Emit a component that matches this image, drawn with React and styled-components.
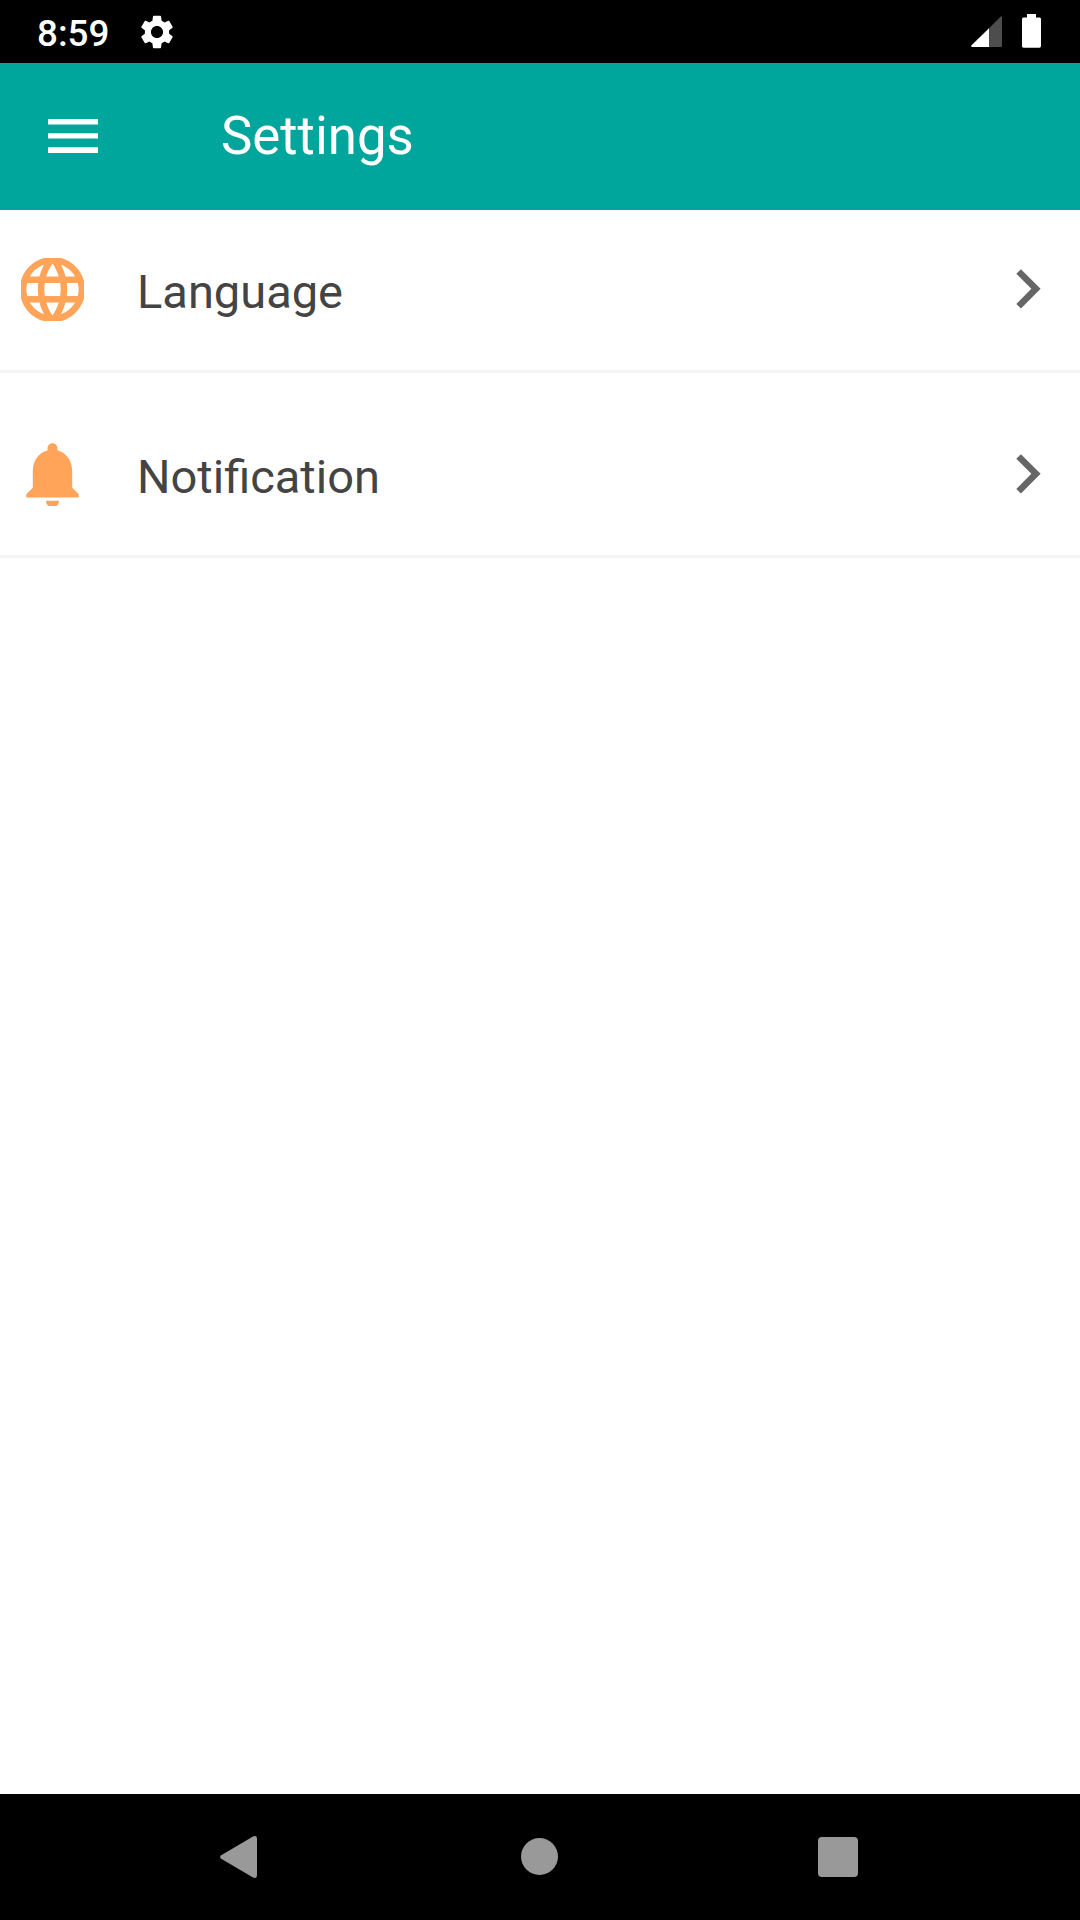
import React from 'react';
import styled, { createGlobalStyle } from 'styled-components';

const GlobalStyle = createGlobalStyle`
  * { box-sizing: border-box; }
  body { margin: 0; background: #fff; font-family: Roboto, "Noto Sans", sans-serif; }
  svg { display: block; flex: none; }
`;

const Screen = styled.div`
  width: 1080px;
  height: 1920px;
  display: flex;
  flex-direction: column;
  overflow: hidden;
  background: #fff;
`;

const StatusBar = styled.header`
  height: 63px;
  flex: none;
  display: flex;
  justify-content: space-between;
  padding: 0 39px 0 37px;
  background: #000;
  color: #fff;
`;

const StatusGroup = styled.div`
  display: flex;
  align-items: flex-start;
  gap: ${(p) => p.$gap}px;
  padding-top: ${(p) => p.$top}px;
`;

const Clock = styled.span`
  width: 72px;
  font-size: 36.75px;
  font-weight: 500;
  line-height: 43px;
  margin-top: -3px;
  white-space: nowrap;
`;

const AppBar = styled.div`
  height: 147px;
  flex: none;
  display: flex;
  align-items: flex-start;
  padding: 42px 48px 0;
  gap: 123px;
  background: #00a69c;
  color: #fff;
`;

const MenuButton = styled.button`
  width: 50px;
  height: 34px;
  margin-top: 14px;
  padding: 0;
  border: 0;
  background: none;
  color: inherit;
  display: block;
`;

const Title = styled.h1`
  margin: 0;
  font-size: 52.8px;
  font-weight: 400;
  line-height: 62px;
`;

const List = styled.main`
  flex: 1;
  display: flex;
  flex-direction: column;
`;

const Row = styled.div`
  height: ${(p) => (p.$first ? 163 : 185)}px;
  padding: ${(p) => (p.$first ? 48 : 70)}px 21px 0;
  display: flex;
  align-items: flex-start;
  border-bottom: 3px solid #f4f4f4;
`;

const Label = styled.span`
  flex: 1;
  margin-left: 53px;
  padding-top: 6px;
  font-size: 47px;
  line-height: 56px;
  color: #444;
`;

const NavBar = styled.footer`
  height: 126px;
  flex: none;
  display: flex;
  align-items: center;
  padding-left: 220px;
  background: #000;
  color: #999;
`;

const NavButton = styled.span`
  display: block;
  width: ${(p) => p.$width}px;
`;

const Globe = () => (
  <svg width="63" height="63" viewBox="2.36 2.36 19.28 19.28" fill="#ffa459">
    <path d="M11.99 2C6.47 2 2 6.48 2 12s4.47 10 9.99 10C17.52 22 22 17.52 22 12S17.52 2 11.99 2zm6.93 6h-2.95c-.32-1.25-.78-2.45-1.38-3.56 1.84.63 3.37 1.91 4.33 3.56zM12 4.04c.83 1.2 1.48 2.53 1.91 3.96h-3.82c.43-1.43 1.08-2.76 1.91-3.96zM4.26 14C4.1 13.36 4 12.69 4 12s.1-1.36.26-2h3.38c-.08.66-.14 1.32-.14 2 0 .68.06 1.34.14 2H4.26zm.82 2h2.95c.32 1.25.78 2.45 1.38 3.56-1.84-.63-3.37-1.9-4.33-3.56zm2.95-8H5.08c.96-1.66 2.49-2.93 4.33-3.56C8.81 5.55 8.35 6.75 8.03 8zM12 19.96c-.83-1.2-1.48-2.53-1.91-3.96h3.82c-.43 1.43-1.08 2.76-1.91 3.96zM14.34 14H9.66c-.09-.66-.16-1.32-.16-2 0-.68.07-1.35.16-2h4.68c.09.65.16 1.32.16 2 0 .68-.07 1.34-.16 2zm.25 5.56c.6-1.11 1.06-2.31 1.38-3.56h2.95c-.96 1.65-2.49 2.93-4.33 3.56zM16.36 14c.08-.66.14-1.32.14-2 0-.68-.06-1.34-.14-2h3.38c.16.64.26 1.31.26 2s-.1 1.36-.26 2h-3.38z" />
  </svg>
);

const Bell = () => (
  <svg width="63" height="63" viewBox="2.4 2.4 19.2 19.2" fill="#ffa459">
    <path d="M12 22c1.1 0 2-.9 2-2h-4c0 1.1.89 2 2 2zm6-6v-5c0-3.07-1.64-5.64-4.5-6.32V4c0-.83-.67-1.5-1.5-1.5s-1.5.67-1.5 1.5v.68C7.63 5.36 6 7.92 6 11v5l-2 2v1h16v-1l-2-2z" />
  </svg>
);

const Chevron = () => (
  <svg width="63" height="63" viewBox="2.4 2.6 19.2 19.2" fill="#666">
    <path d="M10 6L8.59 7.41 13.17 12l-4.58 4.59L10 18l6-6z" />
  </svg>
);

const Gear = () => (
  <svg width="34" height="34" viewBox="1.9 1.9 20.2 20.2" fill="#fff">
    <path d="M19.14 12.94c.04-.3.06-.61.06-.94 0-.32-.02-.64-.07-.94l2.03-1.58c.18-.14.23-.41.12-.61l-1.92-3.32c-.12-.22-.37-.29-.59-.22l-2.39.96c-.5-.38-1.03-.7-1.62-.94l-.36-2.54c-.04-.24-.24-.41-.48-.41h-3.84c-.24 0-.43.17-.47.41l-.36 2.54c-.59.24-1.13.57-1.62.94l-2.39-.96c-.22-.08-.47 0-.59.22L2.74 8.87c-.12.21-.08.47.12.61l2.03 1.58c-.05.3-.09.63-.09.94s.02.64.07.94l-2.03 1.58c-.18.14-.23.41-.12.61l1.92 3.32c.12.22.37.29.59.22l2.39-.96c.5.38 1.03.7 1.62.94l.36 2.54c.05.24.24.41.48.41h3.84c.24 0 .44-.17.47-.41l.36-2.54c.59-.24 1.13-.56 1.62-.94l2.39.96c.22.08.47 0 .59-.22l1.92-3.32c.12-.22.07-.47-.12-.61l-2.01-1.58zM12 15.6c-1.98 0-3.6-1.62-3.6-3.6s1.62-3.6 3.6-3.6 3.6 1.62 3.6 3.6-1.62 3.6-3.6 3.6z" />
  </svg>
);

const Signal = () => (
  <svg width="31" height="31" viewBox="0 0 31 31">
    <path d="M18 12.3V31H1Q-.3 30.3.3 29.5Z" fill="#fff" />
    <path d="M18 12.3L29.5.8Q31-.3 31 1.3V30q0 1-1 1H18Z" fill="#4d4d4d" />
  </svg>
);

const Battery = () => (
  <svg width="19" height="34" viewBox="0 0 19 34">
    <path d="M5 0h9v3.5h3.5Q19 3.5 19 5v27q0 1.7-1.5 1.7h-16Q0 33.7 0 32V5q0-1.5 1.5-1.5H5z" fill="#fff" />
  </svg>
);

const MenuIcon = () => (
  <svg width="50" height="34" viewBox="0 0 50 34" fill="currentColor">
    <path d="M0 0h50v5.4H0zM0 14.2h50v5.4H0zM0 28.2h50v5.8H0z" />
  </svg>
);

const Back = () => (
  <svg width="37" height="42" viewBox="0 0 37 42" fill="currentColor">
    <path d="M1.2 19.2L33 .5Q37-1 37 3v36q0 4-4 2.5L1.2 22.8Q-1 21 1.2 19.2z" />
  </svg>
);

const Home = () => (
  <svg width="38" height="38" viewBox="0 0 38 38" fill="currentColor">
    <circle cx="18.5" cy="18.5" r="18.5" />
  </svg>
);

const Recents = () => (
  <svg width="40" height="40" viewBox="0 0 40 40" fill="currentColor">
    <rect width="40" height="40" rx="4" />
  </svg>
);

const items = [
  { label: 'Language', Icon: Globe },
  { label: 'Notification', Icon: Bell },
];

export default function App() {
  return (
    <>
      <GlobalStyle />
      <Screen>
        <StatusBar>
          <StatusGroup $gap={31} $top={15}>
            <Clock>8:59</Clock>
            <Gear />
          </StatusGroup>
          <StatusGroup $gap={20} $top={14}>
            <StatusGroup $gap={0} $top={2}>
              <Signal />
            </StatusGroup>
            <Battery />
          </StatusGroup>
        </StatusBar>
        <AppBar>
          <MenuButton aria-label="Menu">
            <MenuIcon />
          </MenuButton>
          <Title>Settings</Title>
        </AppBar>
        <List>
          {items.map(({ label, Icon }, i) => (
            <Row key={label} $first={i === 0}>
              <Icon />
              <Label>{label}</Label>
              <Chevron />
            </Row>
          ))}
        </List>
        <NavBar>
          <NavButton $width={301}>
            <Back />
          </NavButton>
          <NavButton $width={297}>
            <Home />
          </NavButton>
          <NavButton $width={40}>
            <Recents />
          </NavButton>
        </NavBar>
      </Screen>
    </>
  );
}
